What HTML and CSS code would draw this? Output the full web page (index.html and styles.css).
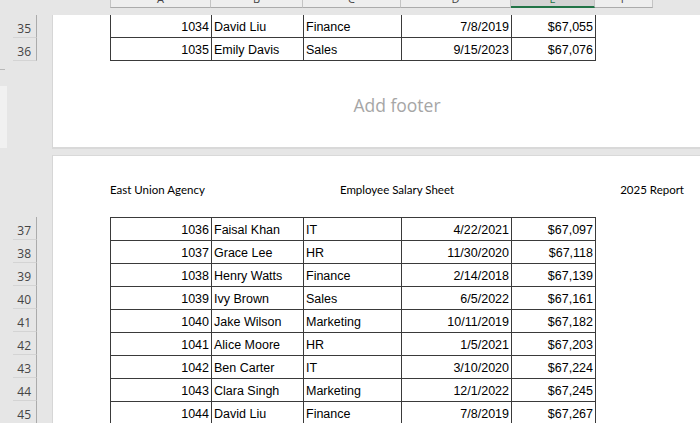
FILE: index.html
```html
<!DOCTYPE html>
<html>
<head>
<meta charset="utf-8">
<link rel="stylesheet" href="styles.css">
</head>
<body>
<div class="app">
  <div class="colbar">
    <div class="colhead w-a"><span>A</span></div>
    <div class="colhead w-b"><span>B</span></div>
    <div class="colhead w-c"><span>C</span></div>
    <div class="colhead w-d"><span>D</span></div>
    <div class="colhead w-e sel"><span>E</span></div>
    <div class="colhead w-f"><span>F</span></div>
  </div>
  <div class="band band1">
    <div class="gutter">
      <div class="rowheads">
        <div class="rh">35</div>
        <div class="rh">36</div>
      </div>
      <div class="gmark"></div>
      <div class="gstrip"></div>
    </div>
    <div class="page page1">
      <table class="grid clipped">
        <colgroup><col class="c-a"><col class="c-b"><col class="c-c"><col class="c-d"><col class="c-e"></colgroup>
        <tr><td class="r">1034</td><td>David Liu</td><td>Finance</td><td class="r">7/8/2019</td><td class="r">$67,055</td></tr>
        <tr class="last"><td class="r">1035</td><td>Emily Davis</td><td>Sales</td><td class="r">9/15/2023</td><td class="r">$67,076</td></tr>
      </table>
      <div class="footer">Add footer</div>
    </div>
  </div>
  <div class="band band2">
    <div class="gutter">
      <div class="rowheads rh2">
        <div class="rh">37</div>
        <div class="rh">38</div>
        <div class="rh">39</div>
        <div class="rh">40</div>
        <div class="rh">41</div>
        <div class="rh">42</div>
        <div class="rh">43</div>
        <div class="rh">44</div>
        <div class="rh">45</div>
      </div>
    </div>
    <div class="page page2">
      <div class="hdr">
        <span class="hl">East Union Agency</span>
        <span class="hc">Employee Salary Sheet</span>
        <span class="hr">2025 Report</span>
      </div>
      <table class="grid">
        <colgroup><col class="c-a"><col class="c-b"><col class="c-c"><col class="c-d"><col class="c-e"></colgroup>
        <tr><td class="r">1036</td><td>Faisal Khan</td><td>IT</td><td class="r">4/22/2021</td><td class="r">$67,097</td></tr>
        <tr><td class="r">1037</td><td>Grace Lee</td><td>HR</td><td class="r">11/30/2020</td><td class="r">$67,118</td></tr>
        <tr><td class="r">1038</td><td>Henry Watts</td><td>Finance</td><td class="r">2/14/2018</td><td class="r">$67,139</td></tr>
        <tr><td class="r">1039</td><td>Ivy Brown</td><td>Sales</td><td class="r">6/5/2022</td><td class="r">$67,161</td></tr>
        <tr><td class="r">1040</td><td>Jake Wilson</td><td>Marketing</td><td class="r">10/11/2019</td><td class="r">$67,182</td></tr>
        <tr><td class="r">1041</td><td>Alice Moore</td><td>HR</td><td class="r">1/5/2021</td><td class="r">$67,203</td></tr>
        <tr><td class="r">1042</td><td>Ben Carter</td><td>IT</td><td class="r">3/10/2020</td><td class="r">$67,224</td></tr>
        <tr><td class="r">1043</td><td>Clara Singh</td><td>Marketing</td><td class="r">12/1/2022</td><td class="r">$67,245</td></tr>
        <tr><td class="r">1044</td><td>David Liu</td><td>Finance</td><td class="r">7/8/2019</td><td class="r">$67,267</td></tr>
      </table>
    </div>
  </div>
</div>
</body>
</html>
```

FILE: styles.css
```css
* { box-sizing: border-box; }
html, body { margin: 0; padding: 0; }
body {
  width: 700px;
  height: 423px;
  overflow: hidden;
  background: #e6e6e6;
}
.app {
  width: 700px;
  height: 423px;
  display: flex;
  flex-direction: column;
  overflow: hidden;
}

/* column header strip */
.colbar {
  display: flex;
  height: 8px;
  padding-left: 110px;
  flex-shrink: 0;
}
.colhead {
  height: 8px;
  overflow: hidden;
  background: #eeeeee;
  border-right: 1px solid #c4c4c4;
  border-bottom: 1px solid #ababab;
  text-align: center;
  font-family: "Open Sans", sans-serif;
  font-size: 11px;
  color: #444;
}
.colhead span { display: block; line-height: 14px; margin-top: -8px; }
.colhead.w-a { border-left: 1px solid #c4c4c4; }
.colhead.sel { background: #d3d3d3; border-bottom: 2px solid #217346; color: #217346; }
.w-a { width: 101px; }
.w-b { width: 92px; }
.w-c { width: 98px; }
.w-d { width: 110px; }
.w-e { width: 84px; }
.w-f { width: 58px; }

/* bands */
.band { display: flex; flex-shrink: 0; }
.band1 { margin-top: 7px; height: 134px; }
.band2 { margin-top: 6px; flex: 1; }
.gutter { width: 52px; flex-shrink: 0; }
.rowheads { margin-left: 13px; width: 24px; }
.rh2 { margin-top: 62px; }
.rh {
  height: 23px;
  border-right: 1px solid #ababab;
  border-bottom: 1px solid #d4d4d4;
  text-align: right;
  padding-right: 5px;
  font-family: "Open Sans", sans-serif;
  font-size: 12px;
  line-height: 28px;
  color: #444;
}
.gmark { margin-top: 8px; width: 5px; height: 1px; background: #b8b8b8; }
.gstrip { margin-top: 16px; width: 7px; height: 62px; background: #f1f1f1; }

.page {
  flex: 1;
  background: #ffffff;
  border-left: 1px solid #d6d6d6;
  overflow: hidden;
  padding-left: 57px;
}
.page1 { border-bottom: 2px solid #d9d9d9; }
.page2 { border-top: 1px solid #d9d9d9; }

.grid {
  border-collapse: collapse;
  table-layout: fixed;
  width: 485px;
  font-family: "Liberation Sans", Arial, sans-serif;
  font-size: 12.5px;
  color: #000;
}
.clipped { margin-top: -1px; }
.c-a { width: 101px; }
.c-b { width: 92px; }
.c-c { width: 98px; }
.c-d { width: 110px; }
.c-e { width: 84px; }
.grid td {
  height: 23px;
  border: 1px solid #3a3a3a;
  padding: 0 2px 3px 2px;
  vertical-align: bottom;
  white-space: nowrap;
  overflow: hidden;
  line-height: 14px;
}
.grid td.r { text-align: right; }

.footer {
  margin-top: 32px;
  width: 574px;
  text-align: center;
  font-family: "Open Sans", sans-serif;
  font-size: 17.5px;
  color: #a6a6a6;
}

.hdr {
  display: grid;
  grid-template-columns: 1fr auto 1fr;
  align-items: baseline;
  height: 61px;
  padding-top: 27px;
  width: 574px;
  font-family: Lato, "Open Sans", sans-serif;
  font-size: 11.5px;
  color: #000;
}
.hl { text-align: left; }
.hr { text-align: right; }
```
